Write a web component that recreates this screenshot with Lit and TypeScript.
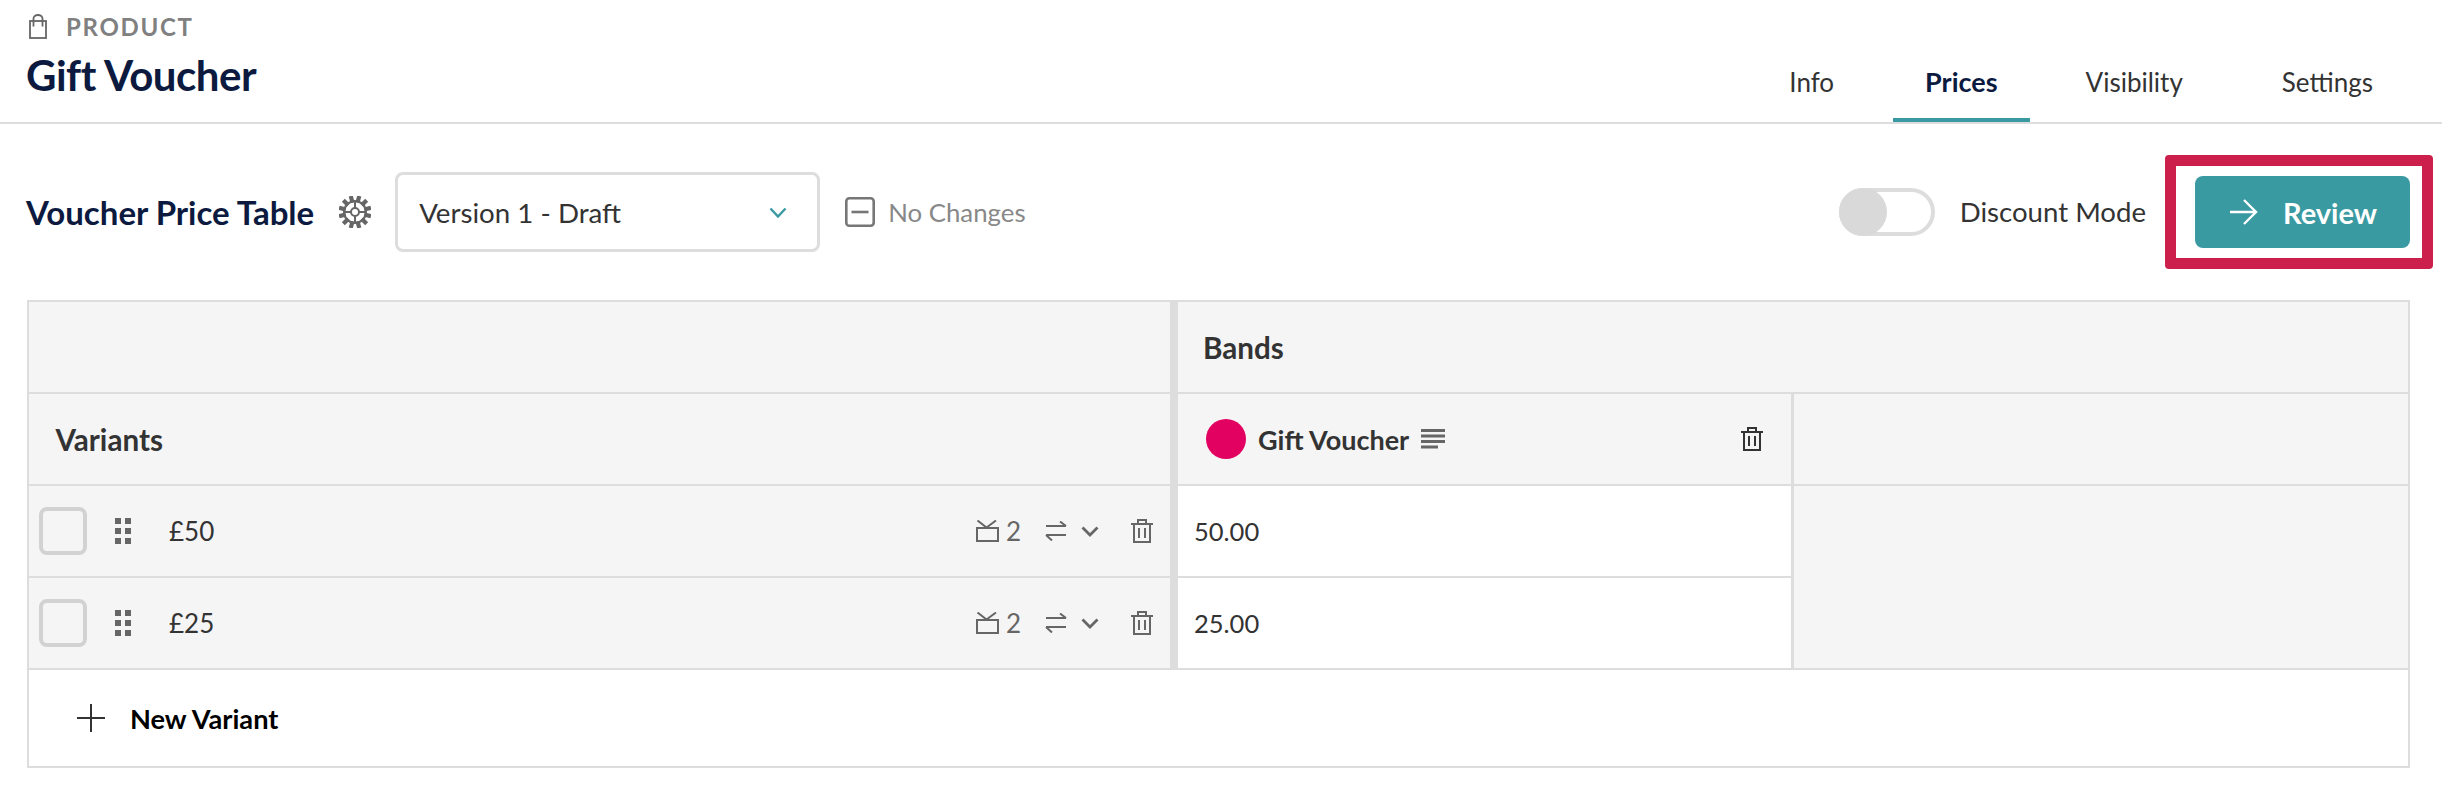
import { LitElement, html, css, svg } from "lit";
import { customElement } from "lit/decorators.js";

const ink = "#666";
const bag = html`<svg class="bag" width="18" height="25" viewBox="0 0 18 25" fill="none" stroke="${ink}" stroke-width="1.800"><rect x="1" y="7" width="16" height="17"/><path d="M4.500 12.500V4.500a4.500 3.500 0 0 1 9 0v8"/></svg>`;
const gearTeeth = Array.from({ length: 12 }, (_, i) => svg`<rect x="14.900" y="0.500" width="2.200" height="5" fill="${ink}" transform="rotate(${i * 30 + 15} 16 16)"/>`);
const gear = html`<svg class="gear" width="32" height="32" viewBox="0 0 32 32" fill="none" stroke="${ink}" stroke-width="2">${gearTeeth}<circle cx="16" cy="16" r="11"/><circle cx="16" cy="16" r="4"/><path d="M16 5v7M16 20v7M5 16h7M20 16h7"/></svg>`;
const chevron = html`<svg width="18" height="11" viewBox="0 0 18 11" fill="none" stroke="#3a9aa1" stroke-width="2.400"><path d="M1.500 1.500 9 9.500l7.500-8"/></svg>`;
const minusBox = html`<svg width="30" height="30" viewBox="0 0 30 30" fill="none" stroke="#777" stroke-width="2.600"><rect x="1.300" y="1.300" width="27.400" height="27.400" rx="3"/><path d="M6.500 15h17"/></svg>`;
const arrow = html`<svg width="28" height="26" viewBox="0 0 28 26" fill="none" stroke="#fff" stroke-width="2.400"><path d="M0 13h26M14 1l12 12-12 12"/></svg>`;
const tv = html`<svg width="23" height="22" viewBox="0 0 23 22" fill="none" stroke="currentColor" stroke-width="2"><rect x="1" y="8" width="21" height="13"/><path d="M1.500 .500 10.500 7.500 20 .500"/></svg>`;
const swap = html`<svg width="22" height="20" viewBox="0 0 22 20" fill="none" stroke="currentColor" stroke-width="2"><path d="M1 5h20M15 .500l6 4.500M21 14H1M7 19.500 1 14"/></svg>`;
const down = html`<svg width="18" height="11" viewBox="0 0 18 11" fill="none" stroke="currentColor" stroke-width="2.800"><path d="M1.500 1.500 9 9l7.500-7.500"/></svg>`;
const trash = html`<svg width="22" height="24" viewBox="0 0 22 24" fill="none" stroke="currentColor" stroke-width="2"><path d="M0 5h22M3 5v18h16V5M7 5V1h8v4M8 9v10M14 9v10"/></svg>`;
const lines = html`<svg width="24" height="20" viewBox="0 0 24 20" fill="${ink}"><rect width="24" height="3"/><rect y="5.500" width="24" height="3"/><rect y="11" width="24" height="3"/><rect y="16.500" width="17" height="3"/></svg>`;
const dots = html`<svg width="16" height="26" viewBox="0 0 16 26" fill="${ink}"><rect width="6" height="6"/><rect x="10" width="6" height="6"/><rect y="10" width="6" height="6"/><rect x="10" y="10" width="6" height="6"/><rect y="20" width="6" height="6"/><rect x="10" y="20" width="6" height="6"/></svg>`;
const plus = html`<svg width="28" height="28" viewBox="0 0 28 28" fill="none" stroke="#333" stroke-width="2"><path d="M14 0v28M0 14h28"/></svg>`;

@customElement("app-root")
export class AppRoot extends LitElement {
  static styles = css`
    :host { display: block; height: 800px; background: #fff; font-family: Lato, sans-serif; color: #333; font-size: 26px; box-sizing: border-box; }
    * { box-sizing: border-box; }
    .top { height: 124px; border-bottom: 2px solid #ddd; display: flex; justify-content: space-between; padding: 0 36px 0 26px; }
    .title { display: flex; flex-direction: column; }
    .crumb { display: flex; align-items: center; gap: 19px; height: 26px; margin-top: 13px; padding-left: 3px; color: #808080; font-weight: 700; font-size: 24px; letter-spacing: 1.700px; }
    h1 { margin: 14px 0 0; font-size: 42px; line-height: 44px; font-weight: 700; color: #0c1a3f; letter-spacing: -0.500px; }
    .tabs { display: flex; align-self: flex-end; }
    .tab { padding: 0 33px; height: 52px; line-height: 24px; margin-left: 26px; }
    .tab.on { font-weight: 700; font-size: 27px; padding: 0 32px; color: #0c1a3f; border-bottom: 4px solid #3a9aa1; }
    .tab.vis { margin-left: 23px; }
    .tab.last { margin-left: 33px; }
    .bar { height: 145px; padding: 48px 9px 0 26px; display: flex; align-items: flex-start; }
    .bar h2 { margin: 0; font-size: 33px; font-weight: 700; color: #0c1a3f; line-height: 80px; }
    .gear { margin: 24px 24px 0 25px; }
    .select { width: 425px; height: 80px; border: 3px solid #ddd; border-radius: 8px; display: flex; align-items: center; justify-content: space-between; padding: 0 30px 0 21px; font-size: 27.700px; }
    .nochange { display: flex; align-items: center; gap: 13px; height: 80px; margin-left: 25px; color: #888; font-size: 25.800px; }
    .spacer { flex: 1; }
    .toggle { width: 96px; height: 48px; margin-top: 16px; border: 4px solid #ddd; border-radius: 24px; position: relative; }
    .toggle i { position: absolute; left: -4px; top: -4px; width: 48px; height: 48px; border-radius: 50%; background: #d9d9d9; }
    .dm { margin: 0 19px 0 25px; line-height: 80px; font-size: 27.600px; }
    .callout { width: 268px; height: 114px; margin-top: -17px; border: 11px solid #cc1f4b; border-radius: 4px; padding: 10px 0 0 19px; }
    .btn { width: 215px; height: 72px; border-radius: 8px; background: #3a9aa1; color: #fff; font-weight: 700; font-size: 29px; display: flex; align-items: center; gap: 25px; padding-left: 35px; }
    .table { margin: 31px 32px 0 27px; display: grid; grid-template-columns: 1141px 8px 616px 614px; grid-template-rows: 92px 92px 92px 92px 96px; border: 2px solid #ddd; background: #f5f5f5; width: 2383px; }
    .cell { border-bottom: 2px solid #ddd; display: flex; align-items: center; min-width: 0; }
    .sep { background: #ddd; grid-column: 2; border-bottom: 2px solid #ddd; }
    .b { font-weight: 700; }
    .big { font-size: 29.600px; }
    .band { grid-column: 3 / 5; padding-left: 25px; }
    .var { padding-left: 26.500px; }
    .gv { padding: 0 16px 0 28px; border-right: 3px solid #ddd; font-size: 27px; }
    .gv .dot { width: 40px; height: 40px; border-radius: 50%; background: #e20060; margin-right: 12px; }
    .gv svg { margin-left: 12px; }
    .gv .end { margin-left: auto; margin-right: 12px; display: flex; }
    .gv .end svg { margin-left: 0; }
    .row { padding: 0 17px 0 10px; }
    .check { width: 48px; height: 48px; border: 4px solid #d2d2d2; border-radius: 8px; }
    .row .drag { margin: 0 38px 0 28px; display: flex; }
    .meta { margin-left: auto; display: flex; align-items: center; color: #666; }
    .meta .n { margin: 0 24px 0 7px; }
    .meta .d { margin: 0 32px 0 14px; display: flex; }
    .price { background: #fff; padding-left: 16px; border-right: 3px solid #ddd; font-size: 25.500px; }
    .fill { grid-column: 4; grid-row: 3 / 5; }
    .add { grid-column: 1 / 5; background: #fff; border: none; padding-left: 48px; gap: 25px; color: #000; font-weight: 700; font-size: 27.200px; }
  `;

  row(name: string, price: string) {
    return html`
      <div class="cell row">
        <div class="check"></div>
        <span class="drag">${dots}</span>
        <span>${name}</span>
        <span class="meta">${tv}<span class="n">2</span>${swap}<span class="d">${down}</span>${trash}</span>
      </div>
      <div class="sep"></div>
      <div class="cell price">${price}</div>`;
  }

  render() {
    return html`
      <header class="top">
        <div class="title">
          <div class="crumb">${bag}<span>PRODUCT</span></div>
          <h1>Gift Voucher</h1>
        </div>
        <nav class="tabs">
          <div class="tab">Info</div>
          <div class="tab on">Prices</div>
          <div class="tab vis">Visibility</div>
          <div class="tab last">Settings</div>
        </nav>
      </header>
      <section class="bar">
        <h2>Voucher Price Table</h2>
        ${gear}
        <div class="select"><span>Version 1 - Draft</span>${chevron}</div>
        <div class="nochange">${minusBox}<span>No Changes</span></div>
        <div class="spacer"></div>
        <div class="toggle"><i></i></div>
        <div class="dm">Discount Mode</div>
        <div class="callout"><div class="btn">${arrow}<span>Review</span></div></div>
      </section>
      <section class="table">
        <div class="cell"></div><div class="sep"></div><div class="cell band b big">Bands</div>
        <div class="cell var b big">Variants</div><div class="sep"></div>
        <div class="cell gv b"><span class="dot"></span><span>Gift Voucher</span>${lines}<span class="end">${trash}</span></div>
        <div class="cell"></div>
        ${this.row("£50", "50.00")}
        <div class="cell fill"></div>
        ${this.row("£25", "25.00")}
        <div class="cell add">${plus}<span>New Variant</span></div>
      </section>`;
  }
}
